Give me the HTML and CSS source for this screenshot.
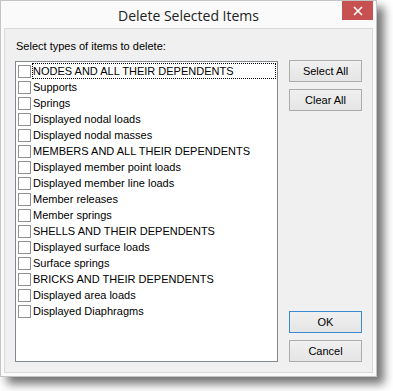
FILE: index.html
```html
<!DOCTYPE html>
<html>
<head>
<meta charset="utf-8">
<link rel="stylesheet" href="styles.css">
</head>
<body>
<div class="window">
  <div class="titlebar">
    <span class="title">Delete Selected Items</span>
    <div class="close">
      <svg width="10" height="10" viewBox="0 0 10 10"><path d="M1 1 L9 9 M9 1 L1 9" stroke="#fff" stroke-width="1.6" fill="none"/></svg>
    </div>
  </div>
  <div class="client">
    <div class="label">Select types of items to delete:</div>
    <div class="main">
      <div class="listbox">
        <div class="item"><span class="cb"></span><span class="txt focus">NODES AND ALL THEIR DEPENDENTS</span></div>
        <div class="item"><span class="cb"></span><span class="txt">Supports</span></div>
        <div class="item"><span class="cb"></span><span class="txt">Springs</span></div>
        <div class="item"><span class="cb"></span><span class="txt">Displayed nodal loads</span></div>
        <div class="item"><span class="cb"></span><span class="txt">Displayed nodal masses</span></div>
        <div class="item"><span class="cb"></span><span class="txt">MEMBERS AND ALL THEIR DEPENDENTS</span></div>
        <div class="item"><span class="cb"></span><span class="txt">Displayed member point loads</span></div>
        <div class="item"><span class="cb"></span><span class="txt">Displayed member line loads</span></div>
        <div class="item"><span class="cb"></span><span class="txt">Member releases</span></div>
        <div class="item"><span class="cb"></span><span class="txt">Member springs</span></div>
        <div class="item"><span class="cb"></span><span class="txt">SHELLS AND THEIR DEPENDENTS</span></div>
        <div class="item"><span class="cb"></span><span class="txt">Displayed surface loads</span></div>
        <div class="item"><span class="cb"></span><span class="txt">Surface springs</span></div>
        <div class="item"><span class="cb"></span><span class="txt">BRICKS AND THEIR DEPENDENTS</span></div>
        <div class="item"><span class="cb"></span><span class="txt">Displayed area loads</span></div>
        <div class="item"><span class="cb"></span><span class="txt">Displayed Diaphragms</span></div>
      </div>
      <div class="buttons">
        <div class="group">
          <div class="btn">Select All</div>
          <div class="btn">Clear All</div>
        </div>
        <div class="group">
          <div class="btn default">OK</div>
          <div class="btn">Cancel</div>
        </div>
      </div>
    </div>
  </div>
</div>
</body>
</html>
```
FILE: styles.css
```css
html, body {
  margin: 0;
  padding: 0;
  background: #ffffff;
}
body {
  width: 393px;
  height: 391px;
  overflow: hidden;
  font-family: "Liberation Sans", Arial, sans-serif;
  font-size: 11px;
  color: #000;
}
.window {
  position: relative;
  box-sizing: border-box;
  width: 377px;
  height: 377px;
  background: #fafafa;
  border: 1px solid #c4c4c4;
  box-shadow: 7px 7px 9px rgba(0, 0, 0, 0.55);
  display: flex;
  flex-direction: column;
}
.titlebar {
  height: 27px;
  display: flex;
  align-items: center;
  justify-content: center;
  flex: none;
}
.title {
  font-family: "Open Sans", "Noto Sans", sans-serif;
  font-size: 14px;
  color: #1e1e1e;
  margin-top: 1px;
}
.close {
  position: absolute;
  top: 0;
  right: 3px;
  width: 31px;
  height: 19px;
  background: #c75050;
  display: flex;
  align-items: center;
  justify-content: center;
}
.client {
  flex: 1;
  margin: 0 3px 3px 3px;
  background: #f0f0f0;
  border: 1px solid #dadada;
  padding: 11px 10px 10px 10px;
  display: flex;
  flex-direction: column;
}
.label {
  line-height: 13px;
  padding-left: 1px;
  margin-bottom: 8px;
}
.main {
  display: flex;
  gap: 11px;
  flex: 1;
}
.listbox {
  box-sizing: border-box;
  width: 264px;
  height: 301px;
  background: #fff;
  border: 1px solid #828790;
  padding: 1px 1px;
}
.item {
  height: 16px;
  display: flex;
  align-items: center;
}
.cb {
  box-sizing: border-box;
  width: 13px;
  height: 13px;
  border: 1px solid #8e8f8f;
  background: #fff;
  margin-left: 1px;
  margin-right: 1px;
  flex: none;
}
.txt {
  line-height: 14px;
  padding: 0;
  border: 1px dotted transparent;
  white-space: nowrap;
}
.txt.focus {
  border-color: #000;
  flex: 1;
}
.buttons {
  display: flex;
  flex-direction: column;
  justify-content: space-between;
  margin-top: -1px;
  height: 302px;
}
.group {
  display: flex;
  flex-direction: column;
  gap: 7px;
}
.btn {
  box-sizing: border-box;
  width: 73px;
  height: 22px;
  border: 1px solid #acacac;
  background: linear-gradient(#f0f0f0, #e5e5e5);
  display: flex;
  align-items: center;
  justify-content: center;
}
.btn.default {
  border-color: #3c8bd1;
}
```
